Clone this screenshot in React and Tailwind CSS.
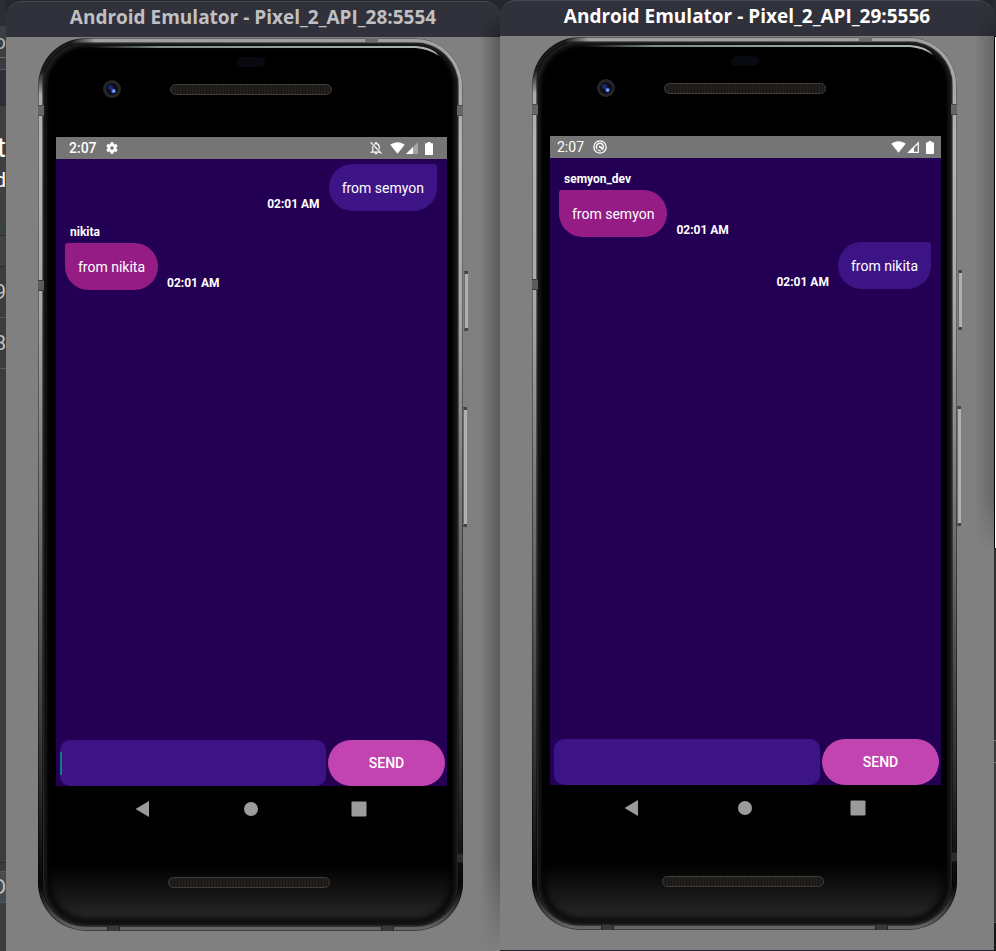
import React, { useId } from "react";

const gearTeeth = [0, 60, 120, 180, 240, 300];

function GearIcon() {
  return (
    <svg className="h-3 w-3" viewBox="0 0 24 24" fill="none" aria-hidden="true">
      <circle cx="12" cy="12" r="6.2" stroke="white" strokeWidth="5" />
      {gearTeeth.map((a) => (
        <rect key={a} x="9" y="0.5" width="6" height="5" rx="1" fill="white" transform={`rotate(${a} 12 12)`} />
      ))}
    </svg>
  );
}

function SyncBadgeIcon() {
  return (
    <svg className="h-[14px] w-[14px]" viewBox="0 0 28 28" fill="none" stroke="white" aria-hidden="true">
      <circle cx="14" cy="14" r="12.300" strokeWidth="2.600" />
      <path d="M8 17.500a7 7 0 0 1 11.500-8c1.800 2.200 1.800 5 .8 7.500" strokeWidth="3" />
      <path d="M9.500 19a6 6 0 0 0 6 2.500" strokeWidth="2.500" />
      <path d="M12 13q4 0 8 6.500" strokeWidth="3.500" />
    </svg>
  );
}

function BellOffIcon() {
  return (
    <svg className="h-[14px] w-[14px]" viewBox="0 0 24 24" fill="none" stroke="white" aria-hidden="true">
      <path d="M3 2.500l18.500 19" strokeWidth="2" />
      <path d="M6.500 9v8.500L4.500 19h14" strokeWidth="2" />
      <path d="M9 5.500C10 4.800 11 4.500 12 4.500c3.300 0 5.500 2.500 5.500 6v3.500" strokeWidth="2" />
      <path d="M12 1.500v3M10 21.500h4" strokeWidth="2.500" />
    </svg>
  );
}

function WifiIcon() {
  return (
    <svg className="h-3 w-[15px]" viewBox="0 0 15 12" aria-hidden="true">
      <path d="M0.300 2.800C4.500-.6 10.500-.6 14.700 2.800L7.500 11.800z" fill="white" />
    </svg>
  );
}

function SignalIcon({ outlined }) {
  return (
    <svg className="h-3 w-3" viewBox="0 0 12 12" aria-hidden="true">
      {outlined ? (
        <>
          <path d="M1.800 11.300L11.300 1.800V11.300z" fill="none" stroke="white" strokeWidth="1.200" />
          <path d="M0.500 11.800L7 5.300V11.800z" fill="white" />
        </>
      ) : (
        <>
          <path d="M0 12L12 0V12z" fill="white" opacity="0.35" />
          <path d="M0 12L7 5V12z" fill="white" />
        </>
      )}
    </svg>
  );
}

function BatteryIcon() {
  return (
    <svg className="h-[13px] w-2" viewBox="0 0 8 13" aria-hidden="true">
      <path d="M2.500 0h3v1.300H7.400q.6 0 .6.700V12.300q0 .7-.6.700H.6Q0 13 0 12.300V2q0-.7.6-.7H2.500z" fill="white" />
    </svg>
  );
}

function StatusBar({ variant }) {
  const first = variant === "api28";
  return (
    <div
      className={
        "flex h-[22px] shrink-0 items-center bg-[#757575] text-sm leading-none text-white " +
        (first ? "pl-[13px] pr-[14px] font-medium" : "pl-[7px] pr-[7px]")
      }
    >
      <span>2:07</span>
      <span className="ml-[9px]">{first ? <GearIcon /> : <SyncBadgeIcon />}</span>
      <span className="ml-auto flex items-center">
        {first && (
          <span className="mr-[7px]">
            <BellOffIcon />
          </span>
        )}
        <WifiIcon />
        <span className="ml-px mr-[7px]">
          <SignalIcon outlined={!first} />
        </span>
        <BatteryIcon />
      </span>
    </div>
  );
}

function OwnMessage({ text, time }) {
  return (
    <div className="flex items-end justify-end gap-[9px] pt-[5px]">
      <time className="text-xs font-bold leading-[14px]">{time}</time>
      <p className="rounded-[24px] rounded-tr-[3px] bg-[#3d1486] px-[13px] pb-3 pt-[14px] text-sm leading-[21px]">{text}</p>
    </div>
  );
}

function PeerMessage({ author, text, time }) {
  return (
    <div className="pt-[13px]">
      <p className="pl-[5px] text-xs font-bold leading-4">{author}</p>
      <div className="flex items-end gap-[9px] pt-[3px]">
        <p className="rounded-[24px] rounded-tl-[3px] bg-[#951c85] px-[13px] pb-3 pt-[14px] text-sm leading-[21px]">{text}</p>
        <time className="text-xs font-bold leading-[14px]">{time}</time>
      </div>
    </div>
  );
}

function Composer({ focused }) {
  const id = useId();
  return (
    <form className="flex gap-[2px] pl-1 pr-[2px]" onSubmit={(e) => e.preventDefault()}>
      <div className="relative min-w-0 flex-1">
        <label htmlFor={id} className="sr-only">
          Message
        </label>
        <input
          id={id}
          type="text"
          className="block h-[46px] w-full rounded-[10px] bg-[#3d1486] px-2 text-sm text-white outline-none"
        />
        {focused && <span className="absolute left-0 top-3 h-[23px] w-[2px] bg-[#107d86]" />}
      </div>
      <button type="submit" className="h-[46px] w-[117px] rounded-full bg-[#c244b0] text-sm font-medium text-white">
        SEND
      </button>
    </form>
  );
}

function Speaker() {
  return (
    <div className="h-[11px] w-[162px] rounded-full border border-[#3f3e3b] bg-[repeating-linear-gradient(90deg,#221f1c_0px,#221f1c_2px,#171411_2px,#171411_3px)]" />
  );
}

function Camera() {
  return (
    <svg className="h-[18px] w-[18px]" viewBox="0 0 18 18" aria-hidden="true">
      <circle cx="9" cy="9" r="9" fill="#262626" />
      <circle cx="9" cy="9" r="6" fill="#0c0d1c" />
      <circle cx="7.500" cy="7.500" r="2.500" fill="#1c2a70" />
      <circle cx="10.500" cy="11" r="2.200" fill="#4f6bd8" />
      <circle cx="10.800" cy="11.200" r="1" fill="#a9bcff" />
    </svg>
  );
}

function NavBar({ wide }) {
  return (
    <div className={"flex h-[45px] shrink-0 items-center justify-center pr-[2px] " + (wide ? "gap-[97px]" : "gap-[92px]")}>
      <button type="button" aria-label="Back">
        <svg className="h-4 w-4" viewBox="0 0 16 16" aria-hidden="true">
          <path d="M0.500 8L14 0V16z" fill="#9b9b9b" />
        </svg>
      </button>
      <button type="button" aria-label="Home">
        <svg className="h-4 w-4" viewBox="0 0 16 16" aria-hidden="true">
          <circle cx="8" cy="8" r="7" fill="#9b9b9b" />
        </svg>
      </button>
      <button type="button" aria-label="Overview">
        <svg className="h-4 w-4" viewBox="0 0 16 16" aria-hidden="true">
          <rect x="0.500" y="0.500" width="15" height="15" rx="1" fill="#9b9b9b" />
        </svg>
      </button>
    </div>
  );
}

function AntennaBands() {
  return (
    <>
      <span className="absolute left-0 top-[67px] h-[11px] w-[6px] border-y border-[#4a4a4a] bg-[#666666]" />
      <span className="absolute right-0 top-[67px] h-[11px] w-[6px] border-y border-[#4a4a4a] bg-[#666666]" />
      <span className="absolute left-0 top-[242px] h-[11px] w-[6px] border-y border-[#3a3a3a] bg-[#5c5c5c]" />
      <span className="absolute bottom-[68px] right-0 h-[10px] w-[6px] border-y border-[#1c1c1c] bg-[#2b2b2b]" />
      <span className="absolute right-[85px] top-0 h-1 w-[13px] bg-[#6d6d6d]" />
      <span className="absolute bottom-0 left-[69px] h-[5px] w-[13px] border-x border-[#222222] bg-[#3a3a3a]" />
      <span className="absolute bottom-0 right-[69px] h-[5px] w-[13px] border-x border-[#222222] bg-[#3a3a3a]" />
    </>
  );
}

function SideButtons() {
  return (
    <>
      <span className="absolute -right-[5px] top-[233px] h-[60px] w-[4px] border-y-[3px] border-l border-y-[#444444] border-l-[#6b6b6b] bg-[#b0b0b0]" />
      <span className="absolute -right-[4px] top-[369px] h-[120px] w-[4px] border-y-[3px] border-l border-y-[#444444] border-l-[#6b6b6b] bg-[#b0b0b0]" />
    </>
  );
}

function TopGlare() {
  return (
    <div className="absolute left-[54px] right-[18px] top-[8px] h-4 overflow-hidden">
      <svg className="absolute right-0 top-0 h-4 w-[354px]" viewBox="0 0 354 16" aria-hidden="true">
        <defs>
          <linearGradient id="glare" x1="0" x2="1">
            <stop offset="0" stopColor="#7f8b8b" stopOpacity="0" />
            <stop offset="0.200" stopColor="#7f8b8b" />
            <stop offset="1" stopColor="#aeb6b6" />
          </linearGradient>
        </defs>
        <path d="M0 0H325Q342 1 348 10Q338 3 325 2H0z" fill="url(#glare)" />
      </svg>
    </div>
  );
}

function Phone({ variant, children }) {
  return (
    <div className="relative flex flex-1 flex-col rounded-[48px] bg-[radial-gradient(circle_at_12px_12px,#1a1a1a_0px,#1a1a1a_22px,transparent_46px),linear-gradient(180deg,#a0a0a0_0%,#b4b4b4_12%,#a8a8a8_30%,#868686_45%,#585858_65%,#303030_82%,#080808_95%,#6a6a6a_100%)] p-[5px] shadow-[inset_0_0_0_1px_rgba(0,0,0,0.4)]">
      <AntennaBands />
      <SideButtons />
      <div className="flex flex-1 flex-col rounded-[43px] bg-[linear-gradient(0deg,#303030_0px,#1b1b1b_24px,#000000_62px)] pl-[13px] pr-[11px] shadow-[0_0_0_1px_rgba(0,0,0,0.45),inset_0_0_0_1px_#262626,inset_0_0_3px_4px_#161616,inset_0_0_7px_7px_#040404]">
        <div className="flex h-[94px] shrink-0 flex-col items-center pr-[2px] pt-[14px]">
          <div className="h-[10px] w-7 rounded-full bg-[#090910]" />
          <div className="grid w-full grid-cols-[1fr_162px_1fr] items-center pt-[13px]">
            <div className="pl-[47px]">
              <Camera />
            </div>
            <Speaker />
          </div>
        </div>
        <div className="flex flex-1 flex-col bg-[#230053] text-white">
          <StatusBar variant={variant} />
          {children}
        </div>
        <NavBar wide={variant === "api29"} />
        <div className="flex h-[95px] shrink-0 justify-center pr-[6px] pt-[46px]">
          <Speaker />
        </div>
      </div>
      <TopGlare />
    </div>
  );
}

function EmulatorWindow({ title, active, variant, className, children }) {
  return (
    <section className={"relative flex min-w-0 flex-1 flex-col rounded-t-2xl " + className}>
      <header
        className={
          "flex h-9 shrink-0 items-center justify-center rounded-t-2xl border-t border-[#474751] bg-[#31313b] pb-1 font-['Open_Sans','Noto_Sans',sans-serif] text-[19px] font-bold leading-none " +
          (active ? "text-white" : "text-[#c0c0c2]")
        }
      >
        <h1>{title}</h1>
      </header>
      <div className="flex flex-1 flex-col bg-[#808080] pb-5 pl-8 pr-[37px] pt-px">
        <Phone variant={variant}>{children}</Phone>
      </div>
      <span
        className={
          "pointer-events-none absolute right-0 top-3 w-5 bg-gradient-to-l to-transparent [mask-image:linear-gradient(180deg,transparent_0px,black_24px,black_90%,transparent_100%)] " +
          (active ? "h-[540px] from-black/20" : "bottom-0 from-black/30")
        }
      />
    </section>
  );
}

function EditorEdge() {
  return (
    <div className="w-[6px] shrink-0 overflow-hidden bg-[#3a3d3f] text-right text-xl leading-none text-[#c4c4c4]">
      <div className="h-[26px] bg-[#2c2d35]" />
      <div className="flex h-8 items-center justify-end border-b border-[#66696b] bg-[#3a3f43] text-[#b4b4b4]">o</div>
      <div className="h-3 border-b border-[#55585a] bg-[#3a3d40]" />
      <div className="h-9 bg-[#2f2e3b]" />
      <div className="flex h-[84px] items-center justify-end bg-[#3f3f3f] text-[28px] text-white">t</div>
      <div className="-mt-5 flex h-14 items-start justify-end bg-[#3f3f3f] text-white">d</div>
      <div className="h-[10px] border-b border-[#2c2f30] bg-[#384044]" />
      <div className="h-[31px] border-b border-[#2c2f30] bg-[#414243]" />
      <div className="flex h-[51px] items-center justify-end border-b border-[#55585a]">9</div>
      <div className="flex h-[51px] items-center justify-end border-b border-[#55585a]">8</div>
      <div className="h-[494px] border-b border-[#2a2c2d]" />
      <div className="h-[9px] border-b border-[#56595b]" />
      <div className="flex h-[31px] items-center justify-end border-b border-[#56595b] bg-[#454b4e]">D</div>
    </div>
  );
}

function DesktopEdge() {
  return (
    <div className="flex w-[2px] shrink-0 flex-col bg-[#36383a]">
      <div className="h-9 bg-[#2a2b33]" />
      <div className="h-[512px] border-l border-t border-black bg-white" />
      <div className="h-[193px] border-b border-[#77797b] bg-[#2b2d2e]" />
      <div className="h-[22px] border-b border-[#77797b]" />
      <div className="h-[160px] border-b border-[#4c4f51]" />
      <div className="flex-1 bg-[#151515]" />
    </div>
  );
}

export default function App() {
  return (
    <main className="flex min-h-screen bg-[#26272e] font-[Roboto,'Liberation_Sans',sans-serif]">
      <EditorEdge />
      <EmulatorWindow title="Android Emulator - Pixel_2_API_28:5554" variant="api28" className="mt-px">
        <div className="flex-1 pl-[9px] pr-[10px]">
          <OwnMessage text="from semyon" time="02:01 AM" />
          <PeerMessage author="nikita" text="from nikita" time="02:01 AM" />
        </div>
        <Composer focused />
      </EmulatorWindow>
      <EmulatorWindow title="Android Emulator - Pixel_2_API_29:5556" active variant="api29" className="mb-px">
        <div className="flex-1 pl-[9px] pr-[10px]">
          <PeerMessage author="semyon_dev" text="from semyon" time="02:01 AM" />
          <OwnMessage text="from nikita" time="02:01 AM" />
        </div>
        <Composer />
      </EmulatorWindow>
      <DesktopEdge />
    </main>
  );
}
